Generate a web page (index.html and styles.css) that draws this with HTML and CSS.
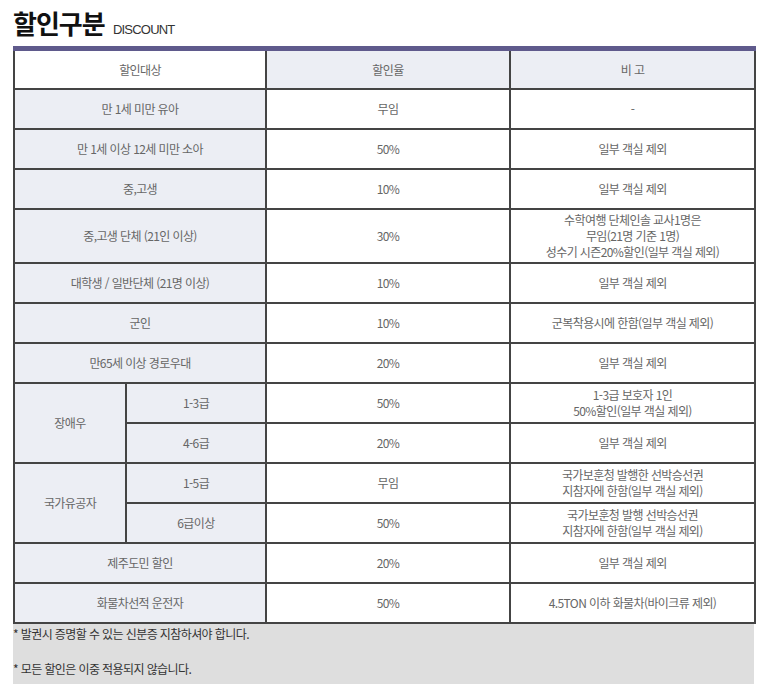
FILE: index.html
```html
<!DOCTYPE html>
<html lang="ko">
<head>
<meta charset="utf-8">
<link rel="stylesheet" href="styles.css">
</head>
<body>
<div class="wrap">
  <h2 class="title">할인구분 <span class="sub">DISCOUNT</span></h2>
  <table class="dc">
    <colgroup>
      <col class="c1"><col class="c2"><col class="c3"><col class="c4">
    </colgroup>
    <thead>
      <tr>
        <th colspan="2" class="h1">할인대상</th>
        <th>할인율</th>
        <th>비 고</th>
      </tr>
    </thead>
    <tbody>
      <tr><td colspan="2" class="k">만 1세 미만 유아</td><td>무임</td><td>-</td></tr>
      <tr><td colspan="2" class="k">만 1세 이상 12세 미만 소아</td><td>50%</td><td>일부 객실 제외</td></tr>
      <tr><td colspan="2" class="k">중,고생</td><td>10%</td><td>일부 객실 제외</td></tr>
      <tr class="tall"><td colspan="2" class="k">중,고생 단체 (21인 이상)</td><td>30%</td><td>수학여행 단체인솔 교사1명은<br>무임(21명 기준 1명)<br>성수기 시즌20%할인(일부 객실 제외)</td></tr>
      <tr><td colspan="2" class="k">대학생 / 일반단체 (21명 이상)</td><td>10%</td><td>일부 객실 제외</td></tr>
      <tr><td colspan="2" class="k">군인</td><td>10%</td><td>군복착용시에 한함(일부 객실 제외)</td></tr>
      <tr><td colspan="2" class="k">만65세 이상 경로우대</td><td>20%</td><td>일부 객실 제외</td></tr>
      <tr><td rowspan="2" class="k">장애우</td><td class="k">1-3급</td><td>50%</td><td>1-3급 보호자 1인<br>50%할인(일부 객실 제외)</td></tr>
      <tr><td class="k">4-6급</td><td>20%</td><td>일부 객실 제외</td></tr>
      <tr><td rowspan="2" class="k">국가유공자</td><td class="k">1-5급</td><td>무임</td><td>국가보훈청 발행한 선박승선권<br>지참자에 한함(일부 객실 제외)</td></tr>
      <tr><td class="k">6급이상</td><td>50%</td><td>국가보훈청 발행 선박승선권<br>지참자에 한함(일부 객실 제외)</td></tr>
      <tr><td colspan="2" class="k">제주도민 할인</td><td>20%</td><td>일부 객실 제외</td></tr>
      <tr><td colspan="2" class="k">화물차선적 운전자</td><td>50%</td><td>4.5TON 이하 화물차(바이크류 제외)</td></tr>
    </tbody>
  </table>
  <div class="notes">
    <p>* 발권시 증명할 수 있는 신분증 지참하셔야 합니다.</p>
    <p>* 모든 할인은 이중 적용되지 않습니다.</p>
  </div>
</div>
</body>
</html>
```
FILE: styles.css
```css
html, body {
  margin: 0;
  padding: 0;
  background: #fff;
}
body {
  font-family: "Noto Sans CJK KR", "Noto Sans", sans-serif;
  color: #555;
}
.wrap {
  padding: 8px 13px 0 13px;
  width: 741px;
}
.title {
  margin: 0;
  height: 38px;
  font-size: 26px;
  font-weight: 700;
  color: #111;
  letter-spacing: -1px;
  line-height: 30px;
}
.title .sub {
  font-size: 13px;
  font-weight: 400;
  color: #333;
  letter-spacing: -0.8px;
  margin-left: 2px;
  font-family: "Liberation Sans", "Noto Sans", sans-serif;
}
.dc {
  width: 741px;
  border-collapse: collapse;
  table-layout: fixed;
  border-top: 5px solid #5f5a8c;
}
.c1 { width: 112px; }
.c2 { width: 140px; }
.c3 { width: 244px; }
.c4 { width: 245px; }
.dc th, .dc td {
  border: 2px solid #444;
  text-align: center;
  vertical-align: middle;
  font-size: 12px;
  font-weight: 400;
  letter-spacing: -0.6px;
  line-height: 16px;
  color: #666;
  padding: 0 4px;
  height: 38px;
  background: #fff;
}
.dc th {
  background: #eceef4;
  height: 37px;
}
.dc th.h1 { background: #fff; }
.dc thead th { border-top: 0; }
.dc td.k { background: #eceef4; }
.dc tr.tall td { height: 52px; }
.notes {
  background: #dedede;
  height: 58px;
  padding-top: 2px;
}
.notes p {
  margin: 0 0 19px 0;
  font-size: 12px;
  letter-spacing: -0.6px;
  line-height: 16px;
  color: #333;
}
```
